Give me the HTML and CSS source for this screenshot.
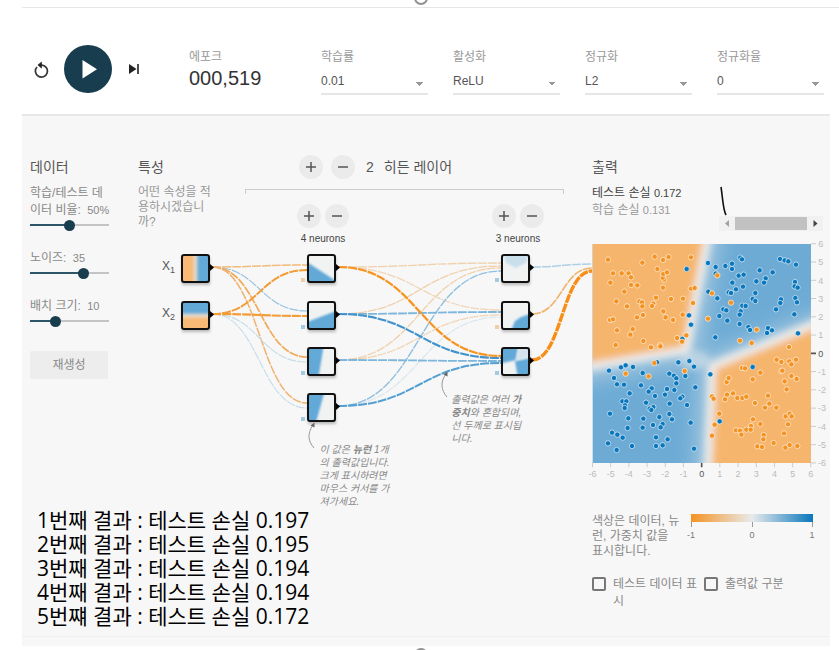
FILE: index.html
```html
<!DOCTYPE html>
<html lang="ko">
<head>
<meta charset="utf-8">
<title>Playground</title>
<link rel="stylesheet" href="styles.css">
</head>
<body>
<span class="handle handle-top"></span>
<span class="handle handle-bottom"></span>
<header class="top">
  <div class="controls">
    <button class="icon-btn" aria-label="reset"><svg width="18" height="18" viewBox="0 0 18 18"><path d="M4 6.500A6 6 0 1 0 9 4.600H6" fill="none" stroke="#333" stroke-width="1.700" transform="translate(0 .5)"/><path d="M4.500 5.100 8.800 1.400V8.800Z" fill="#222"/></svg></button>
    <button class="play" aria-label="play"><svg width="48" height="48" viewBox="0 0 48 48"><path d="M18.5 15V33.5L33 24.2Z" fill="#fff"/></svg></button>
    <button class="icon-btn" aria-label="step"><svg width="12" height="12" viewBox="0 0 12 12"><path d="M1 1V11L8.5 6Z" fill="#222"/><path d="M10 1V11" stroke="#222" stroke-width="1.6"/></svg></button>
  </div>
  <div class="epoch"><span class="caption">에포크</span><span class="epoch-value">000,519</span></div>
  <div class="selects">
    <div class="field"><label class="caption" for="rate">학습률</label><select id="rate"><option>0.01</option></select></div>
    <div class="field"><label class="caption" for="act">활성화</label><select id="act"><option>ReLU</option></select></div>
    <div class="field"><label class="caption" for="reg">정규화</label><select id="reg"><option>L2</option></select></div>
    <div class="field"><label class="caption" for="regrate">정규화율</label><select id="regrate"><option>0</option></select></div>
  </div>
</header>
<main class="panel">
  <div class="columns">
    <div class="left">
      <div class="work">
        <section class="data">
          <h2>데이터</h2>
          <div class="sliders">
            <div class="slider"><label for="ratio">학습/테스트 데<br>이터 비율: <span class="num">50%</span></label><input id="ratio" class="r50" type="range" min="0" max="100" value="50"></div>
            <div class="slider"><label for="noise">노이즈: <span class="num">35</span></label><input id="noise" class="r70" type="range" min="0" max="50" value="35"></div>
            <div class="slider"><label for="batch">배치 크기: <span class="num">10</span></label><input id="batch" class="r30" type="range" min="1" max="32" value="10"></div>
          </div>
          <button class="regen">재생성</button>
        </section>
        <section class="network">
          <div class="net-head">
            <div class="features">
              <h2>특성</h2>
              <p>어떤 속성을 적<br>용하시겠습니<br>까?</p>
            </div>
            <div class="hidden-layers">
              <div class="layer-count">
                <button class="round" aria-label="add layer"><svg width="12" height="12"><path d="M6 1V11M1 6H11"/></svg></button>
                <button class="round" aria-label="remove layer"><svg width="12" height="12"><path d="M1 6H11"/></svg></button>
                <span class="count">2</span><span class="count-label">히든 레이어</span>
              </div>
              <div class="bracket"></div>
              <div class="layers">
                <div class="layer"><div class="pair"><button class="round" aria-label="add neuron"><svg width="12" height="12"><path d="M6 1V11M1 6H11"/></svg></button><button class="round" aria-label="remove neuron"><svg width="12" height="12"><path d="M1 6H11"/></svg></button></div><span>4 neurons</span></div>
                <div class="layer"><div class="pair"><button class="round" aria-label="add neuron"><svg width="12" height="12"><path d="M6 1V11M1 6H11"/></svg></button><button class="round" aria-label="remove neuron"><svg width="12" height="12"><path d="M1 6H11"/></svg></button></div><span>3 neurons</span></div>
              </div>
            </div>
          </div>
          <div class="diagram">
            <svg class="graph" viewBox="138 246 454 262">
              <defs>
                <clipPath id="box"><rect x="1" y="1" width="27" height="27" rx="1"/></clipPath>
                <filter id="soft" x="-30%" y="-30%" width="160%" height="160%"><feGaussianBlur stdDeviation="0.8"/></filter>
                <filter id="shade" x="-30%" y="-30%" width="160%" height="170%"><feGaussianBlur stdDeviation="1.5"/></filter>
                <linearGradient id="gx"><stop offset=".38" stop-color="#f9ba74"/><stop offset=".5" stop-color="#e3dccf"/><stop offset=".62" stop-color="#62a9d8"/></linearGradient>
                <linearGradient id="gy" x2="0" y2="1"><stop offset=".38" stop-color="#62a9d8"/><stop offset=".5" stop-color="#e3dccf"/><stop offset=".62" stop-color="#f9ba74"/></linearGradient>
              </defs>
              <g id="links" fill="none"></g>
              <g id="bias"></g>
              <g id="nodes"></g>
              <g class="feature-name"><text x="162" y="270">X<tspan class="sub" dy="3">1</tspan></text><text x="162" y="317">X<tspan class="sub" dy="3">2</tspan></text></g>
              <g fill="none" stroke="#999"><path d="M314 448C308 441 307 434 313 425"/><path d="M447 397C441 390 440 382 446 374"/></g>
              <path d="M314.500 422.500 310.500 425.500 314.500 427.500ZM447.500 371.500 443.500 374.500 447.500 376.500Z" fill="#666"/>
            </svg>
            <p class="callout callout-neuron">이 값은 <b>뉴런</b> 1개<br>의 출력값입니다.<br>크게 표시하려면<br>마우스 커서를 가<br>져가세요.</p>
            <p class="callout callout-weight">출력값은 여러 <b>가</b><br><b>중치</b>와 혼합되며,<br>선 두께로 표시됩<br>니다.</p>
          </div>
        </section>
      </div>
      <ol class="results">
        <li>1번째 결과 : 테스트 손실 0.197</li>
        <li>2번째 결과 : 테스트 손실 0.195</li>
        <li>3번째 결과 : 테스트 손실 0.194</li>
        <li>4번째 결과 : 테스트 손실 0.194</li>
        <li>5번쨰 결과 : 테스트 손실 0.172</li>
      </ol>
    </div>
    <section class="output">
      <h2>출력</h2>
      <div class="loss-row">
        <div class="losses"><div class="test">테스트 손실 <span>0.172</span></div><div class="train">학습 손실 <span>0.131</span></div></div>
        <svg class="history" width="104" height="45" viewBox="0 0 104 45"><path d="M2 1C3.500 10 4 24 7 29" fill="none" stroke="#111" stroke-width="1.600"/><rect y="30" width="104" height="15" fill="#f1f1f1"/><rect x="16" y="31" width="72" height="13" fill="#c1c1c1"/><path d="M10 34V41L6 37.500Z" fill="#a3a3a3"/><path d="M94.500 34V41L98.500 37.500Z" fill="#444"/></svg>
      </div>
      <svg class="heat" viewBox="36 180 714 720">
        <defs>
          <clipPath id="plot"><rect x="38" y="192" width="655" height="657"/></clipPath>
          <filter id="b12" x="-20%" y="-20%" width="140%" height="140%"><feGaussianBlur stdDeviation="11"/></filter>
          <filter id="b30" x="-60%" y="-60%" width="220%" height="220%"><feGaussianBlur stdDeviation="32"/></filter>
        </defs>
        <g clip-path="url(#plot)">
          <rect x="36" y="190" width="660" height="662" fill="#6dabd5"/>
          <g filter="url(#b30)" fill="none" stroke="#dfe6ea" stroke-opacity=".6" stroke-width="56"><path d="M400 100 325 515-50 580"/><path d="M800 400 390 560 375 950"/></g>
          <g filter="url(#b12)"><path d="M-50 100H398L318 511-50 574Z" fill="#f5b56d" stroke="#eceae8" stroke-width="26"/><path d="M800 392 396 558 380 950H800Z" fill="#f5b56d" stroke="#eceae8" stroke-width="26"/></g>
          <ellipse cx="345" cy="540" rx="45" ry="28" fill="#dfe6ea" opacity=".55" filter="url(#b12)"/>
        </g>
        <g id="dots"></g>
        <g id="axes"></g>
      </svg>
      <div class="legend">
        <p>색상은 데이터, 뉴<br>런, 가중치 값을<br>표시합니다.</p>
        <svg width="130" height="30" viewBox="0 0 130 30"><defs><linearGradient id="scale"><stop offset="0" stop-color="#f59322"/><stop offset=".5" stop-color="#e8eaeb"/><stop offset="1" stop-color="#0877bd"/></linearGradient></defs><rect x="5" width="122" height="8" fill="url(#scale)"/><path d="M5.500 8V13M66.500 8V13M126.500 8V13" stroke="#999"/><g class="legend-text"><text x="5" y="24">-1</text><text x="66" y="24">0</text><text x="126" y="24">1</text></g></svg>
      </div>
      <div class="checks">
        <label><input type="checkbox"><span>테스트 데이터 표<br>시</span></label>
        <label><input type="checkbox"><span>출력값 구분</span></label>
      </div>
    </section>
  </div>
  <div class="edge"></div>
</main>
<script src="main.js"></script>
</body>
</html>
```
FILE: styles.css
```css
* { box-sizing: border-box; }
body {
  margin: 0;
  min-height: 100vh;
  position: relative;
  overflow: hidden;
  background: #fff;
  color: #555;
  font: 12px/17px "Liberation Sans", "Noto Sans CJK KR", sans-serif;
}
h2, p, ol { margin: 0; padding: 0; font-weight: 400; }
button { border: 0; padding: 0; background: none; font: inherit; color: inherit; }
svg { display: block; }

.handle {
  position: absolute;
  left: 50%;
  width: 14px;
  height: 14px;
  margin-left: -6px;
  border: 2px solid #929292;
  border-radius: 50%;
  background: #fff;
}
.handle-top { top: -9px; }
.handle-bottom { bottom: -12px; }

.top {
  display: flex;
  align-items: flex-start;
  margin: 7px 0 0 22px;
  border-top: 1px solid #e6e6e6;
  height: 107px;
  padding: 37px 15px 0 11px;
}
.controls { display: flex; align-items: center; gap: 13px; width: 156px; }
.icon-btn { display: grid; place-items: center; width: 18px; height: 18px; }
.play { width: 48px; height: 48px; border-radius: 50%; background: #183d4e; }
.caption { display: block; color: #999; line-height: 18px; }
.epoch { width: 132px; padding-top: 3px; }
.epoch-value { display: block; font-size: 20px; line-height: 24px; color: #333; }
.selects { flex: 1; display: grid; grid-template-columns: repeat(4, 1fr); gap: 25px; padding-top: 3px; }
.field select {
  display: block;
  width: 100%;
  height: 25px;
  margin-top: 4px;
  padding: 0;
  border: 0;
  border-bottom: 2px solid #e6e6e6;
  border-radius: 0;
  appearance: none;
  font: inherit;
  color: #555;
  background: conic-gradient(from -45deg at 50% 100%, #999 90deg, transparent 0) right 5px top 12px / 6px 3px no-repeat;
  background: conic-gradient(from 135deg at 50% 0, transparent 0 0), linear-gradient(to bottom left, #999 50%, transparent 50%) right 8px top 12px / 4px 4px no-repeat, linear-gradient(to bottom right, #999 50%, transparent 50%) right 4px top 12px / 4px 4px no-repeat;
}

.panel {
  margin: 0 9px 0 22px;
  background: #f7f7f7;
  border-top: 2px solid #e8e8e8;
  padding-top: 39px;
}
.columns { display: grid; grid-template-columns: minmax(0, 1fr) 238px; padding-left: 8px; }
h2 { font-size: 14px; line-height: 24px; color: #555; margin-bottom: 6px; }
.work { display: flex; gap: 30px; }
.data { width: 78px; color: #888; white-space: nowrap; }
.sliders { display: grid; gap: 19px; }
.slider label { display: block; }
.num { font-size: 11px; margin-left: 3px; }
input[type="range"] {
  display: block;
  appearance: none;
  width: 100%;
  height: 12px;
  margin: 0;
  background: linear-gradient(to right, #2c5568 var(--fill), #c4c4c4 var(--fill)) center / 100% 2px no-repeat;
}
input[type="range"]::-webkit-slider-thumb { appearance: none; width: 11px; height: 11px; border-radius: 50%; background: #183d4e; }
.r50 { --fill: 50%; }
.r70 { --fill: 70%; }
.r30 { --fill: 30%; }
.regen { width: 100%; height: 28px; margin-top: 24px; border-radius: 2px; background: #ededed; }

.network { flex: 1; min-width: 0; }
.net-head { display: flex; }
.features { width: 107px; }
.features p { line-height: 15px; color: #999; }
.hidden-layers { flex: 1; padding-right: 28px; }
.layer-count { display: flex; align-items: center; height: 24px; gap: 8px; padding-left: 54px; font-size: 14px; }
.count { margin: 0 2px 0 3px; }
.round { display: grid; place-items: center; width: 24px; height: 24px; border-radius: 50%; background: #ebebeb; }
.round path { stroke: #555; stroke-width: 1.5; }
.bracket { height: 5px; margin: 10px 0; border: 1px solid #ccc; border-bottom: 0; }
.layers { display: flex; justify-content: space-between; padding: 0 20px 0 52px; }
.layer { display: grid; justify-items: center; gap: 4px; font-size: 10px; line-height: 14px; color: #444; }
.pair { display: flex; gap: 4px; }
.diagram { position: relative; }
.graph { width: 100%; height: auto; }
.feature-name { font-size: 12px; fill: #555; }
.sub { font-size: 9px; }
.callout { position: absolute; font-size: 10px; line-height: 13px; font-style: italic; color: #888; white-space: nowrap; }
.callout-neuron { left: 40%; top: 75%; }
.callout-weight { left: 69%; top: 56%; }

.results {
  list-style: none;
  padding-left: 7px;
  color: #000;
  font: 21px/24px "Open Sans", "Noto Sans CJK KR", sans-serif;
}

.loss-row { display: flex; justify-content: space-between; padding-right: 7px; }
.losses { white-space: nowrap; }
.losses span { font-size: 11px; }
.test { color: #444; }
.train { color: #999; }
.history { margin-top: 1px; }
.heat { width: 100%; height: auto; margin-top: 9px; overflow: visible; }
.tick { font-size: 27px; fill: #bbb; }
.tick-zero { fill: #555; }
.legend { display: flex; gap: 8px; margin-top: 34px; color: #888; }
.legend p { width: 86px; line-height: 15px; white-space: nowrap; }
.legend-text { font-size: 9px; fill: #777; text-anchor: middle; }
.checks { display: flex; margin-top: 17px; color: #888; white-space: nowrap; gap: 7px; }
.checks label { display: flex; gap: 7px; align-items: flex-start; }
.checks input { appearance: none; width: 14px; height: 14px; margin: 1px 0 0; border: 2px solid #777; border-radius: 2px; }
.edge { height: 10px; margin-top: 8px; border-top: 1px solid #f0f0f0; }
```
FILE: main.js
```js
const NS = 'http://www.w3.org/2000/svg';
function add(parent, tag, attrs, text) {
  const el = document.createElementNS(NS, tag);
  for (const k in attrs) el.setAttribute(k, attrs[k]);
  if (text !== undefined) el.textContent = text;
  parent.appendChild(el);
  return el;
}
const byId = id => document.getElementById(id);
const Y = [267, 314, 360, 406];

// Links: x from, row from, x to, y to, colour, width
[
  [212, 0, 307, 265, '#f2bb7c', 1.5], [212, 0, 307, 311, '#98c3e0', 1.2],
  [212, 0, 307, 357, '#f2aa5a', 1.7], [212, 0, 307, 403, '#f0b271', 1.5],
  [212, 1, 307, 362, '#c5dce8', 1.1], [212, 1, 307, 408, '#c5dce8', 1.1],
  [212, 1, 307, 270, '#f39c38', 2], [212, 1, 307, 316, '#f39c38', 2.2],
  [338, 0, 501, 263, '#f0d0aa', 1.3], [338, 1, 501, 266, '#f0d0aa', 1.3],
  [338, 2, 501, 268, '#f0d0aa', 1.3], [338, 0, 501, 310, '#f0d6b8', 1.3],
  [338, 2, 501, 315, '#f0d6b8', 1.3], [338, 3, 501, 317, '#dae7ee', 1.2],
  [338, 3, 501, 271, '#8fc0df', 1.4], [338, 1, 501, 312, '#7cb6dc', 1.8],
  [338, 2, 501, 361, '#7cb6dc', 1.8], [338, 3, 501, 363, '#539fd1', 2],
  [338, 1, 501, 358, '#3f92cb', 2.1], [338, 0, 501, 356, '#f7931e', 2.2],
  [532, 0, 592, 264, '#acd0e5', 1.5], [532, 1, 592, 268, '#f1b570', 1.7],
  [532, 2, 592, 271, '#f78e18', 3.4]
].forEach(([x, r, tx, ty, c, w]) => {
  const m = (x + tx) / 2;
  add(byId('links'), 'path', { d: `M${x} ${Y[r]}C${m} ${Y[r]} ${m} ${ty} ${tx} ${ty}`, stroke: c, 'stroke-width': w, 'stroke-dasharray': '9 1' });
});

// Neurons: x, row, shapes inside the thumbnail
const B = '#62a9d8';
[
  [181, 0, [['M0 0H29V29H0Z', 'url(#gx)']]],
  [181, 1, [['M0 0H29V29H0Z', 'url(#gy)']]],
  [307, 0, [['M-3 6 32 29V33H-3Z', B]]],
  [307, 1, [['M-3 22 32 9V33H-3Z', B]]],
  [307, 2, [['M-3-3H17L11 33H-3Z', B]]],
  [307, 3, [['M-3-3H18L8 33H-3Z', B]]],
  [501, 0, [['M2-3H28L25 9 20 11 15 14 9 11 5 9Z', '#c9dfec']]],
  [501, 1, [['M9 32 14 20 20 16 32 12V32Z', B]]],
  [501, 2, [['M-3-3H18L15 13-3 17Z', B], ['M14 14 32 10V32H17Z', B], ['M18-3H32V10L15 13Z', '#d5e4ec']]]
].forEach(([x, r, shapes]) => {
  const y = [254, 301, 347, 393][r];
  const g = add(byId('nodes'), 'g', { transform: `translate(${x} ${y})` });
  add(g, 'rect', { x: 1, y: 3, width: 28, height: 28, fill: '#000', opacity: 0.25, filter: 'url(#shade)' });
  add(g, 'rect', { x: 1, y: 1, width: 27, height: 27, fill: '#f1f3f3' });
  const inner = add(g, 'g', { 'clip-path': 'url(#box)' });
  shapes.forEach(([d, fill]) => add(inner, 'path', { d, fill, filter: 'url(#soft)' }));
  add(g, 'rect', { x: 1, y: 1, width: 27, height: 27, rx: 2, fill: 'none', stroke: '#111', 'stroke-width': 2 });
  add(g, 'path', { d: 'M29 10V17L33 13.5Z', fill: '#000' });
});

[[301, 278, 0], [301, 325, 1], [301, 371, 1], [301, 417, 1], [495, 278, 1], [495, 325, 0], [495, 371, 1]]
  .forEach(([x, y, blue]) => add(byId('bias'), 'rect', { x, y, width: 4, height: 4, fill: blue ? '#a5cbe2' : '#f1cfa6' }));

// Sample points of the upper and lower half of the plot
const lowOffset = 480;
const upper = {
  o: [84,239,187,248,224,230,249,240,266,231,333,232,232,267,99,280,125,280,146,280,153,292,252,299,248,293,250,282,261,277,91,308,153,315,172,316,133,335,249,323,333,326,344,324,109,364,141,379,178,364,186,367,187,379,228,353,220,371,216,378,273,357,309,356,339,369,250,394,257,412,279,420,308,404,189,405,171,412,90,420,99,418,111,451,158,447,151,464,190,483,107,495,213,502,241,495,291,474,319,466,306,485,384,416,396,340,412,286,453,368,530,449,480,482,515,489,627,501],
  b: [320,267,384,249,407,261,407,281,436,258,456,251,456,267,481,233,486,238,476,287,491,284,457,308,489,320,468,328,446,337,453,339,385,335,412,355,430,388,439,391,418,408,442,422,327,406,333,434,406,472,307,477,539,271,578,277,557,295,552,308,529,304,526,339,518,357,526,363,487,377,497,378,482,394,479,404,479,432,505,441,510,450,561,459,564,444,576,451,600,237,614,241,625,244,648,254,645,306,644,319,653,323,646,354,651,367,603,358,601,369,588,388,643,403,654,460]
};
const lower = {
  o: [137,101,223,69,206,109,314,93,241,19,396,169,401,176,418,221,404,254,396,287,440,126,446,114,486,84,495,85,541,98,518,118,441,164,459,160,435,178,472,174,487,174,499,170,525,189,564,167,568,191,555,203,589,203,519,238,541,252,513,258,468,271,480,272,484,284,499,269,512,269,551,285,550,298,532,319,546,321,581,309,590,59,604,66,628,64,634,73,648,59,604,93,607,92,634,108,650,117,614,124,620,148,617,229,629,221,635,229,624,253,612,280,616,323,629,315,652,318],
  b: [87,92,123,82,137,76,159,81,102,114,188,99,231,67,295,67,328,63,342,80,391,103,518,81,419,244,111,133,132,134,183,136,149,160,127,184,139,184,135,196,134,204,215,145,206,155,225,168,198,188,220,201,209,206,214,210,255,164,261,147,268,101,282,107,289,115,289,130,283,150,316,108,346,142,307,170,301,175,269,191,321,195,90,221,145,235,190,236,238,231,268,222,276,238,332,248,143,264,188,263,219,255,248,252,242,262,96,278,112,284,128,293,84,310,110,330,156,318,228,292,263,298,228,318,248,316,342,326]
};
function plot(list, color, dy) {
  for (let i = 0; i < list.length; i += 2) {
    add(byId('dots'), 'circle', { cx: list[i], cy: list[i + 1] + dy, r: 8, fill: color, stroke: '#fff', 'stroke-opacity': 0.6, 'stroke-width': 3 });
  }
}
plot(upper.b, '#0877bd', 0);
plot(upper.o, '#f59322', 0);
plot(lower.b, '#0877bd', lowOffset);
plot(lower.o, '#f59322', lowOffset);

for (let v = -6; v <= 6; v++) {
  const x = 365 + v * 54.6;
  const y = 520 - v * 54.8;
  const zero = v === 0;
  const cls = zero ? 'tick tick-zero' : 'tick';
  const stroke = zero ? '#555' : '#ccc';
  add(byId('axes'), 'path', { d: `M${x} 849V862M693 ${y}H708`, stroke, 'stroke-width': zero ? 5 : 3 });
  add(byId('axes'), 'text', { x, y: 891, class: cls, 'text-anchor': 'middle' }, v);
  add(byId('axes'), 'text', { x: v < 0 ? 714 : 715, y: y + 10, class: cls }, v);
}
```
